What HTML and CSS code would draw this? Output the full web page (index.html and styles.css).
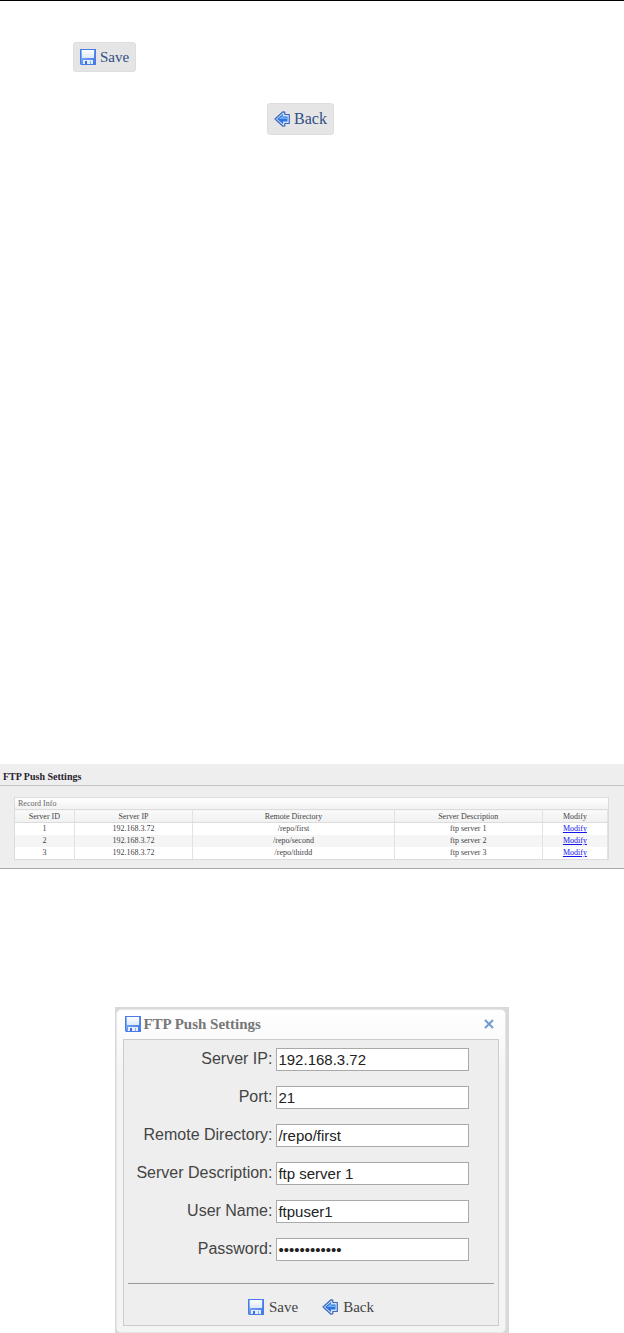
FILE: index.html
```html
<!DOCTYPE html>
<html lang="en">
  <head>
    <meta charset="UTF-8" />
    <meta name="viewport" content="width=device-width, initial-scale=1.0" />
    <title>FTP Push Settings</title>
    <link rel="stylesheet" href="styles.css">
  </head>
  <body>
    <!-- shared icons -->
    <svg class="defs" width="0" height="0" aria-hidden="true">
      <defs>
        <linearGradient id="blue" x1="0" y1="0" x2="1" y2="1">
          <stop offset="0" stop-color="#8db8f8" />
          <stop offset="1" stop-color="#3f74e6" />
        </linearGradient>
        <linearGradient id="label" x1="0" y1="0" x2="0" y2="1">
          <stop offset="0" stop-color="#ffffff" />
          <stop offset="1" stop-color="#dbe8fa" />
        </linearGradient>
        <symbol id="disk" viewBox="0 0 16 16">
          <path d="M0 0H16V16H1L0 15Z" fill="#4a7ce8" />
          <path d="M1 1H15V15H1Z" fill="url(#blue)" />
          <path d="M2 1H14V9H2Z" fill="url(#label)" />
          <path d="M3 11H13V15H3Z" fill="#e3edfd" />
          <path d="M5 12H7V15H5Z" fill="#3d6ddb" />
          <path d="M10 12H11V15H10Z" fill="#8fb0f0" />
        </symbol>
        <symbol id="arrow" viewBox="0 0 16 16">
          <path d="M1 8L9 0.800L10.800 1.200V3.500H15.300V12.500H10.800V14.800L9 15.200Z" fill="#cfe3fb" stroke="#4267b8" stroke-width="1.200" stroke-linejoin="round" />
          <path d="M3 8L9 3V5.500H13.500V10.500H9V13Z" fill="#2f74dc" />
          <path d="M4.500 8L9 4.500V6.500H13.500V8Z" fill="#6db0f5" />
        </symbol>
      </defs>
    </svg>

    <div class="notes">
      <div class="line save-line">
        <button type="button" class="chip"><svg class="icon"><use href="#disk" /></svg>Save</button>
      </div>
      <div class="line back-line">
        <button type="button" class="chip big"><svg class="icon"><use href="#arrow" /></svg>Back</button>
      </div>
    </div>

    <div class="settings">
      <h1>FTP Push Settings</h1>
      <div class="record">
        <table>
          <caption>Record Info</caption>
          <colgroup>
            <col class="c-id" />
            <col class="c-ip" />
            <col class="c-dir" />
            <col class="c-desc" />
            <col class="c-mod" />
          </colgroup>
          <thead>
            <tr>
              <th>Server ID</th>
              <th>Server IP</th>
              <th>Remote Directory</th>
              <th>Server Description</th>
              <th>Modify</th>
            </tr>
          </thead>
          <tbody>
            <tr>
              <td>1</td>
              <td>192.168.3.72</td>
              <td>/repo/first</td>
              <td>ftp server 1</td>
              <td><a href="#dialog">Modify</a></td>
            </tr>
            <tr>
              <td>2</td>
              <td>192.168.3.72</td>
              <td>/repo/second</td>
              <td>ftp server 2</td>
              <td><a href="#dialog">Modify</a></td>
            </tr>
            <tr>
              <td>3</td>
              <td>192.168.3.72</td>
              <td>/repo/thirdd</td>
              <td>ftp server 3</td>
              <td><a href="#dialog">Modify</a></td>
            </tr>
          </tbody>
        </table>
      </div>
    </div>

    <div class="frame" id="dialog">
      <div class="dialog">
        <div class="titlebar">
          <svg class="icon"><use href="#disk" /></svg>
          <h2>FTP Push Settings</h2>
          <button type="button" class="close" aria-label="Close">
            <svg viewBox="0 0 10 10"><path d="M1 1L9 9M9 1L1 9" /></svg>
          </button>
        </div>
        <form class="panel">
          <div class="fields">
            <label for="ip">Server IP:</label>
            <input type="text" id="ip" value="192.168.3.72" />
            <label for="port">Port:</label>
            <input type="text" id="port" value="21" />
            <label for="dir">Remote Directory:</label>
            <input type="text" id="dir" value="/repo/first" />
            <label for="desc">Server Description:</label>
            <input type="text" id="desc" value="ftp server 1" />
            <label for="user">User Name:</label>
            <input type="text" id="user" value="ftpuser1" />
            <label for="pass">Password:</label>
            <input type="password" id="pass" value="ftppassword1" />
          </div>
          <div class="actions">
            <button type="button"><svg class="icon"><use href="#disk" /></svg>Save</button>
            <button type="button"><svg class="icon"><use href="#arrow" /></svg>Back</button>
          </div>
        </form>
      </div>
    </div>
  </body>
</html>
```

FILE: styles.css
```css
* {
  margin: 0;
  padding: 0;
  box-sizing: border-box;
}
body {
  background: #ffffff;
  font-family: "Liberation Serif", serif;
}
.defs {
  position: absolute;
}
button {
  display: flex;
  align-items: center;
  border: none;
  background: none;
  font-family: "Liberation Serif", serif;
  font-size: 15px;
  color: #444;
  cursor: pointer;
}
.icon {
  width: 16px;
  height: 16px;
  flex: none;
}

/* top buttons */
.notes {
  border-top: 1px solid #000;
  padding-top: 41px;
  padding-bottom: 629px;
}
.save-line {
  padding-left: 73px;
}
.back-line {
  padding-left: 267px;
  padding-top: 31px;
}
.chip {
  height: 30px;
  padding: 0px 6px;
  gap: 4px;
  color: #2f4f85;
  background-color: #e5e5e5;
  border: 1px solid #dedede;
  border-radius: 3px;
}
.chip.big {
  height: 32px;
  font-size: 16px;
}

/* server list */
.settings {
  background-color: #eeeeee;
  border-bottom: 1px solid #a8a8a8;
  padding-bottom: 8px;
}
h1 {
  height: 22px;
  padding-left: 3px;
  padding-top: 3px;
  line-height: 20px;
  font-size: 10px;
  color: #2a2230;
  border-bottom: 1px solid #c4c4c4;
}
.record {
  margin: 11px 15px 0px 14px;
  border: 1px solid #dcdcdc;
  background-color: #fff;
}
table {
  width: 100%;
  table-layout: fixed;
  border-collapse: collapse;
  font-size: 8px;
  color: #444;
}
caption {
  height: 11px;
  padding-left: 3px;
  line-height: 11px;
  text-align: left;
  color: #666;
  background-image: linear-gradient(#ffffff, #f2f2f2);
}
.c-id {
  width: 10%;
}
.c-ip {
  width: 20%;
}
.c-dir {
  width: 34%;
}
.c-desc {
  width: 25%;
}
.c-mod {
  width: 11%;
}
th,
td {
  height: 12px;
  line-height: 11px;
  text-align: center;
  border-right: 1px solid #e2e2e2;
}
th {
  height: 13px;
  font-weight: normal;
  background-image: linear-gradient(#fafafa, #f0f0f0);
  border-top: 1px solid #dcdcdc;
  border-bottom: 1px solid #dcdcdc;
}
tbody tr:nth-child(even) {
  background-color: #f5f5f5;
}
a {
  color: #1414ee;
}

/* edit dialog */
.frame {
  width: 63%;
  min-width: 392px;
  margin: 138px auto 0px;
  padding: 2px 3px 3px 1px;
  background-color: #d9d9d9;
}
.dialog {
  padding: 0px 6px 6px;
  border: 1px solid #e6e6e6;
  border-radius: 5px;
  background-color: #f6f6f6;
  background-image: linear-gradient(#ffffff, #fafafa 30px, #f4f4f4 60px);
}
.titlebar {
  display: flex;
  align-items: center;
  height: 29px;
  padding-left: 2px;
}
h2 {
  flex: 1;
  padding-left: 2px;
  font-size: 15px;
  color: #777;
}
.close {
  padding: 5px;
}
.close svg {
  width: 10px;
  height: 10px;
  fill: none;
  stroke: #6f9bd1;
  stroke-width: 2;
}
.panel {
  padding: 8px 4px 0px;
  border: 1px solid #cccccc;
  background-color: #eeeeee;
}
.fields {
  display: grid;
  grid-template-columns: 144px 1fr;
  column-gap: 4px;
  row-gap: 15px;
  align-items: center;
  padding-right: 25px;
  padding-bottom: 22px;
  font-family: "Liberation Sans", sans-serif;
  font-size: 16px;
}
label {
  text-align: right;
  white-space: nowrap;
  color: #444;
}
.fields input {
  width: 100%;
  height: 23px;
  padding: 0px 1px;
  font-family: "Liberation Sans", sans-serif;
  font-size: 15px;
  color: #222;
  background-color: #fff;
  border: 1px solid #a9a9a9;
}
.actions {
  display: flex;
  justify-content: center;
  gap: 24px;
  padding: 12px 0px 6px;
  border-top: 1px solid #999;
}
.actions button {
  height: 23px;
  gap: 5px;
}
```
